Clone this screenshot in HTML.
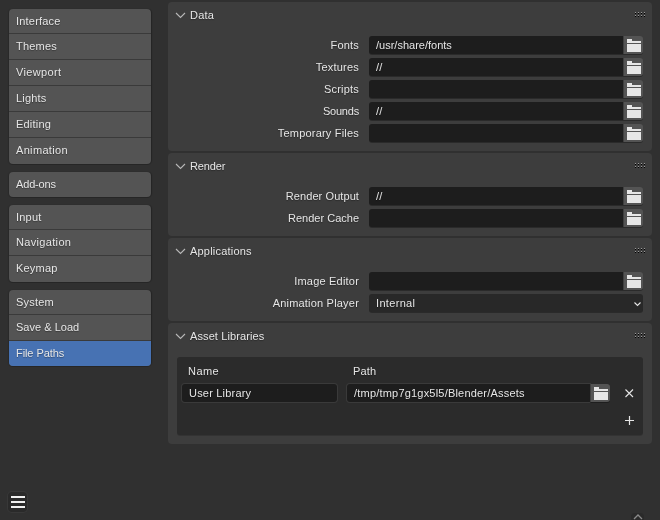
<!DOCTYPE html>
<html><head><meta charset="utf-8"><style>
html,body{margin:0;padding:0}
body{width:660px;height:520px;background:#303030;position:relative;overflow:hidden;font-family:"Liberation Sans",sans-serif;font-size:11px;color:#e6e6e6;letter-spacing:0.2px}
#root{position:absolute;left:0;top:0;width:660px;height:520px;will-change:transform}
.a{position:absolute}
svg{display:block}
.grp{position:absolute;left:9px;width:142px;background:#545454;border-radius:4px;box-shadow:0 1px 0 #262626,1px 0 1px rgba(0,0,0,.25),-1px 0 1px rgba(0,0,0,.15)}
.sep{position:absolute;left:0;width:142px;height:1px;background:#3a3a3a}
.t{position:absolute;line-height:12px;white-space:nowrap;text-shadow:0 1px 1px rgba(0,0,0,.35)}
.pnl{position:absolute;left:168px;width:484px;background:#3d3d3d;border-radius:4px}
.fld{position:absolute;background:#1d1d1d;border-radius:3px;box-shadow:0 1px 0 rgba(0,0,0,.3)}
.btn{position:absolute;background:#545454;border-radius:3px;box-shadow:0 1px 0 rgba(0,0,0,.3),inset 1px 0 0 rgba(0,0,0,.25)}
.lbl{position:absolute;right:301px;line-height:12px;white-space:nowrap;text-align:right;text-shadow:0 1px 1px rgba(0,0,0,.35)}
</style></head><body><div id="root">

<div class="grp" style="top:9px;height:155px">
<div class="sep" style="top:24px"></div>
<div class="sep" style="top:50px"></div>
<div class="sep" style="top:76px"></div>
<div class="sep" style="top:102px"></div>
<div class="sep" style="top:128px"></div>
<div class="t" style="left:7px;top:6px">Interface</div>
<div class="t" style="left:7px;top:31px">Themes</div>
<div class="t" style="left:7px;top:57px;letter-spacing:0.36px">Viewport</div>
<div class="t" style="left:7px;top:83px">Lights</div>
<div class="t" style="left:7px;top:109px">Editing</div>
<div class="t" style="left:7px;top:135px;letter-spacing:0.33px">Animation</div>
</div>
<div class="grp" style="top:172px;height:25px">
<div class="t" style="left:7px;top:6px;letter-spacing:-0.16px">Add-ons</div>
</div>
<div class="grp" style="top:205px;height:77px">
<div class="sep" style="top:24px"></div>
<div class="sep" style="top:50px"></div>
<div class="t" style="left:7px;top:6px">Input</div>
<div class="t" style="left:7px;top:31px;letter-spacing:0.33px">Navigation</div>
<div class="t" style="left:7px;top:57px">Keymap</div>
</div>
<div class="grp" style="top:290px;height:76px">
<div class="sep" style="top:24px"></div>
<div class="sep" style="top:50px"></div>
<div class="a" style="left:0;top:51px;width:142px;height:25px;background:#4772b3;border-radius:0 0 4px 4px"></div>
<div class="t" style="left:7px;top:6px">System</div>
<div class="t" style="left:7px;top:31px;letter-spacing:0.02px">Save &amp; Load</div>
<div class="t" style="left:7px;top:57px;letter-spacing:-0.08px">File Paths</div>
</div>
<div class="a" style="left:8px;top:492px;width:19px;height:20px;background:#2a2a2a;border-radius:4px;box-shadow:0 0 0 1px #383838"></div>
<div class="a" style="left:11px;top:496px;width:14px;height:2px;background:#f0f0f0"></div>
<div class="a" style="left:11px;top:501px;width:14px;height:2px;background:#f0f0f0"></div>
<div class="a" style="left:11px;top:506px;width:14px;height:2px;background:#f0f0f0"></div>
<div class="a" style="left:631px;top:513px;width:13px;height:12px;background:#2a2a2a;border-radius:4px"></div>
<svg class="a" style="left:633px;top:514px" width="10" height="6" viewBox="0 0 10 6"><path d="M1 5l4-4 4 4" fill="none" stroke="#8a8a8a" stroke-width="1.3"/></svg>
<div class="pnl" style="top:2px;height:148.5px"></div>
<div class="a" style="left:175px;top:12px"><svg width="11" height="7" viewBox="0 0 11 7"><path d="M1 1l4.5 4.5L10 1" fill="none" stroke="#b8b8b8" stroke-width="1.1"/></svg></div>
<div class="t" style="left:190px;top:9px">Data</div>
<div class="a" style="left:635px;top:12px;width:1px;height:1px;background:#9a9a9a"></div><div class="a" style="left:635px;top:13px;width:1px;height:1px;background:#000"></div><div class="a" style="left:638px;top:12px;width:1px;height:1px;background:#9a9a9a"></div><div class="a" style="left:638px;top:13px;width:1px;height:1px;background:#000"></div><div class="a" style="left:641px;top:12px;width:1px;height:1px;background:#9a9a9a"></div><div class="a" style="left:641px;top:13px;width:1px;height:1px;background:#000"></div><div class="a" style="left:644px;top:12px;width:1px;height:1px;background:#9a9a9a"></div><div class="a" style="left:644px;top:13px;width:1px;height:1px;background:#000"></div><div class="a" style="left:635px;top:15px;width:1px;height:1px;background:#9a9a9a"></div><div class="a" style="left:635px;top:16px;width:1px;height:1px;background:#000"></div><div class="a" style="left:638px;top:15px;width:1px;height:1px;background:#9a9a9a"></div><div class="a" style="left:638px;top:16px;width:1px;height:1px;background:#000"></div><div class="a" style="left:641px;top:15px;width:1px;height:1px;background:#9a9a9a"></div><div class="a" style="left:641px;top:16px;width:1px;height:1px;background:#000"></div><div class="a" style="left:644px;top:15px;width:1px;height:1px;background:#9a9a9a"></div><div class="a" style="left:644px;top:16px;width:1px;height:1px;background:#000"></div>
<div class="lbl" style="top:39px">Fonts</div>
<div class="fld" style="left:369px;top:36px;width:254px;height:18px;border-radius:3px 0 0 3px"></div>
<div class="btn" style="left:623px;top:36px;width:20px;height:18px;border-radius:0 3px 3px 0"></div>
<div class="a" style="left:627px;top:39px;line-height:0"><svg width="14" height="13" viewBox="0 0 14 13"><path d="M0 0h5v2h9v2H0z M0 5h14v8H0z" fill="#e6e6e6"/></svg></div>
<div class="t" style="left:376px;top:39px;letter-spacing:0.0px">/usr/share/fonts</div>
<div class="lbl" style="top:61px">Textures</div>
<div class="fld" style="left:369px;top:58px;width:254px;height:18px;border-radius:3px 0 0 3px"></div>
<div class="btn" style="left:623px;top:58px;width:20px;height:18px;border-radius:0 3px 3px 0"></div>
<div class="a" style="left:627px;top:61px;line-height:0"><svg width="14" height="13" viewBox="0 0 14 13"><path d="M0 0h5v2h9v2H0z M0 5h14v8H0z" fill="#e6e6e6"/></svg></div>
<div class="t" style="left:376px;top:61px">//</div>
<div class="lbl" style="top:83px">Scripts</div>
<div class="fld" style="left:369px;top:80px;width:254px;height:18px;border-radius:3px 0 0 3px"></div>
<div class="btn" style="left:623px;top:80px;width:20px;height:18px;border-radius:0 3px 3px 0"></div>
<div class="a" style="left:627px;top:83px;line-height:0"><svg width="14" height="13" viewBox="0 0 14 13"><path d="M0 0h5v2h9v2H0z M0 5h14v8H0z" fill="#e6e6e6"/></svg></div>
<div class="lbl" style="top:105px;letter-spacing:-0.2px">Sounds</div>
<div class="fld" style="left:369px;top:102px;width:254px;height:18px;border-radius:3px 0 0 3px"></div>
<div class="btn" style="left:623px;top:102px;width:20px;height:18px;border-radius:0 3px 3px 0"></div>
<div class="a" style="left:627px;top:105px;line-height:0"><svg width="14" height="13" viewBox="0 0 14 13"><path d="M0 0h5v2h9v2H0z M0 5h14v8H0z" fill="#e6e6e6"/></svg></div>
<div class="t" style="left:376px;top:105px">//</div>
<div class="lbl" style="top:127px">Temporary Files</div>
<div class="fld" style="left:369px;top:124px;width:254px;height:18px;border-radius:3px 0 0 3px"></div>
<div class="btn" style="left:623px;top:124px;width:20px;height:18px;border-radius:0 3px 3px 0"></div>
<div class="a" style="left:627px;top:127px;line-height:0"><svg width="14" height="13" viewBox="0 0 14 13"><path d="M0 0h5v2h9v2H0z M0 5h14v8H0z" fill="#e6e6e6"/></svg></div>
<div class="pnl" style="top:153px;height:83px"></div>
<div class="a" style="left:175px;top:163px"><svg width="11" height="7" viewBox="0 0 11 7"><path d="M1 1l4.5 4.5L10 1" fill="none" stroke="#b8b8b8" stroke-width="1.1"/></svg></div>
<div class="t" style="left:190px;top:160px;letter-spacing:-0.13px">Render</div>
<div class="a" style="left:635px;top:163px;width:1px;height:1px;background:#9a9a9a"></div><div class="a" style="left:635px;top:164px;width:1px;height:1px;background:#000"></div><div class="a" style="left:638px;top:163px;width:1px;height:1px;background:#9a9a9a"></div><div class="a" style="left:638px;top:164px;width:1px;height:1px;background:#000"></div><div class="a" style="left:641px;top:163px;width:1px;height:1px;background:#9a9a9a"></div><div class="a" style="left:641px;top:164px;width:1px;height:1px;background:#000"></div><div class="a" style="left:644px;top:163px;width:1px;height:1px;background:#9a9a9a"></div><div class="a" style="left:644px;top:164px;width:1px;height:1px;background:#000"></div><div class="a" style="left:635px;top:166px;width:1px;height:1px;background:#9a9a9a"></div><div class="a" style="left:635px;top:167px;width:1px;height:1px;background:#000"></div><div class="a" style="left:638px;top:166px;width:1px;height:1px;background:#9a9a9a"></div><div class="a" style="left:638px;top:167px;width:1px;height:1px;background:#000"></div><div class="a" style="left:641px;top:166px;width:1px;height:1px;background:#9a9a9a"></div><div class="a" style="left:641px;top:167px;width:1px;height:1px;background:#000"></div><div class="a" style="left:644px;top:166px;width:1px;height:1px;background:#9a9a9a"></div><div class="a" style="left:644px;top:167px;width:1px;height:1px;background:#000"></div>
<div class="lbl" style="top:190px;letter-spacing:0.08px">Render Output</div>
<div class="fld" style="left:369px;top:187px;width:254px;height:18px;border-radius:3px 0 0 3px"></div>
<div class="btn" style="left:623px;top:187px;width:20px;height:18px;border-radius:0 3px 3px 0"></div>
<div class="a" style="left:627px;top:190px;line-height:0"><svg width="14" height="13" viewBox="0 0 14 13"><path d="M0 0h5v2h9v2H0z M0 5h14v8H0z" fill="#e6e6e6"/></svg></div>
<div class="t" style="left:376px;top:190px">//</div>
<div class="lbl" style="top:212px;letter-spacing:0.0px">Render Cache</div>
<div class="fld" style="left:369px;top:209px;width:254px;height:18px;border-radius:3px 0 0 3px"></div>
<div class="btn" style="left:623px;top:209px;width:20px;height:18px;border-radius:0 3px 3px 0"></div>
<div class="a" style="left:627px;top:212px;line-height:0"><svg width="14" height="13" viewBox="0 0 14 13"><path d="M0 0h5v2h9v2H0z M0 5h14v8H0z" fill="#e6e6e6"/></svg></div>
<div class="pnl" style="top:238px;height:82.5px"></div>
<div class="a" style="left:175px;top:248px"><svg width="11" height="7" viewBox="0 0 11 7"><path d="M1 1l4.5 4.5L10 1" fill="none" stroke="#b8b8b8" stroke-width="1.1"/></svg></div>
<div class="t" style="left:190px;top:245px">Applications</div>
<div class="a" style="left:635px;top:248px;width:1px;height:1px;background:#9a9a9a"></div><div class="a" style="left:635px;top:249px;width:1px;height:1px;background:#000"></div><div class="a" style="left:638px;top:248px;width:1px;height:1px;background:#9a9a9a"></div><div class="a" style="left:638px;top:249px;width:1px;height:1px;background:#000"></div><div class="a" style="left:641px;top:248px;width:1px;height:1px;background:#9a9a9a"></div><div class="a" style="left:641px;top:249px;width:1px;height:1px;background:#000"></div><div class="a" style="left:644px;top:248px;width:1px;height:1px;background:#9a9a9a"></div><div class="a" style="left:644px;top:249px;width:1px;height:1px;background:#000"></div><div class="a" style="left:635px;top:251px;width:1px;height:1px;background:#9a9a9a"></div><div class="a" style="left:635px;top:252px;width:1px;height:1px;background:#000"></div><div class="a" style="left:638px;top:251px;width:1px;height:1px;background:#9a9a9a"></div><div class="a" style="left:638px;top:252px;width:1px;height:1px;background:#000"></div><div class="a" style="left:641px;top:251px;width:1px;height:1px;background:#9a9a9a"></div><div class="a" style="left:641px;top:252px;width:1px;height:1px;background:#000"></div><div class="a" style="left:644px;top:251px;width:1px;height:1px;background:#9a9a9a"></div><div class="a" style="left:644px;top:252px;width:1px;height:1px;background:#000"></div>
<div class="lbl" style="top:275px">Image Editor</div>
<div class="fld" style="left:369px;top:272px;width:254px;height:18px;border-radius:3px 0 0 3px"></div>
<div class="btn" style="left:623px;top:272px;width:20px;height:18px;border-radius:0 3px 3px 0"></div>
<div class="a" style="left:627px;top:275px;line-height:0"><svg width="14" height="13" viewBox="0 0 14 13"><path d="M0 0h5v2h9v2H0z M0 5h14v8H0z" fill="#e6e6e6"/></svg></div>
<div class="lbl" style="top:297px">Animation Player</div>
<div class="fld" style="left:369px;top:294px;width:274px;height:18px;background:#282828"></div>
<div class="t" style="left:376px;top:297px;letter-spacing:0.33px">Internal</div>
<svg class="a" style="left:633px;top:301px" width="9" height="6" viewBox="0 0 9 6"><path d="M1.5 1.5l3 3 3-3" fill="none" stroke="#e6e6e6" stroke-width="1.1"/></svg>
<div class="pnl" style="top:323px;height:120.5px"></div>
<div class="a" style="left:175px;top:333px"><svg width="11" height="7" viewBox="0 0 11 7"><path d="M1 1l4.5 4.5L10 1" fill="none" stroke="#b8b8b8" stroke-width="1.1"/></svg></div>
<div class="t" style="left:190px;top:330px;letter-spacing:0.1px">Asset Libraries</div>
<div class="a" style="left:635px;top:333px;width:1px;height:1px;background:#9a9a9a"></div><div class="a" style="left:635px;top:334px;width:1px;height:1px;background:#000"></div><div class="a" style="left:638px;top:333px;width:1px;height:1px;background:#9a9a9a"></div><div class="a" style="left:638px;top:334px;width:1px;height:1px;background:#000"></div><div class="a" style="left:641px;top:333px;width:1px;height:1px;background:#9a9a9a"></div><div class="a" style="left:641px;top:334px;width:1px;height:1px;background:#000"></div><div class="a" style="left:644px;top:333px;width:1px;height:1px;background:#9a9a9a"></div><div class="a" style="left:644px;top:334px;width:1px;height:1px;background:#000"></div><div class="a" style="left:635px;top:336px;width:1px;height:1px;background:#9a9a9a"></div><div class="a" style="left:635px;top:337px;width:1px;height:1px;background:#000"></div><div class="a" style="left:638px;top:336px;width:1px;height:1px;background:#9a9a9a"></div><div class="a" style="left:638px;top:337px;width:1px;height:1px;background:#000"></div><div class="a" style="left:641px;top:336px;width:1px;height:1px;background:#9a9a9a"></div><div class="a" style="left:641px;top:337px;width:1px;height:1px;background:#000"></div><div class="a" style="left:644px;top:336px;width:1px;height:1px;background:#9a9a9a"></div><div class="a" style="left:644px;top:337px;width:1px;height:1px;background:#000"></div>
<div class="a" style="left:177px;top:357px;width:466px;height:77.5px;background:#2b2b2b;border-radius:3px;box-shadow:0 1px 0 rgba(0,0,0,.15)"></div>
<div class="t" style="left:188px;top:365px;letter-spacing:0.45px">Name</div>
<div class="t" style="left:353px;top:365px">Path</div>
<div class="fld" style="left:182px;top:384px;width:155px;height:18px;box-shadow:0 0 0 1px #3a3a3a"></div>
<div class="t" style="left:189px;top:387px">User Library</div>
<div class="fld" style="left:347px;top:384px;width:243px;height:18px;border-radius:3px 0 0 3px;box-shadow:0 0 0 1px #3a3a3a"></div>
<div class="t" style="left:354px;top:387px">/tmp/tmp7g1gx5l5/Blender/Assets</div>
<div class="btn" style="left:590px;top:384px;width:20px;height:18px;border-radius:0 3px 3px 0"></div>
<div class="a" style="left:594px;top:387px;line-height:0"><svg width="14" height="13" viewBox="0 0 14 13"><path d="M0 0h5v2h9v2H0z M0 5h14v8H0z" fill="#e6e6e6"/></svg></div>
<svg class="a" style="left:624px;top:388px" width="11" height="11" viewBox="0 0 11 11"><path d="M1.5 1.5l7.5 7.5M9 1.5l-7.5 7.5" stroke="#e6e6e6" stroke-width="1.1"/></svg>
<svg class="a" style="left:624px;top:415px" width="11" height="11" viewBox="0 0 11 11"><path d="M5.5 1v9M1 5.5h9" stroke="#e6e6e6" stroke-width="1.2"/></svg>
</div></body></html>
